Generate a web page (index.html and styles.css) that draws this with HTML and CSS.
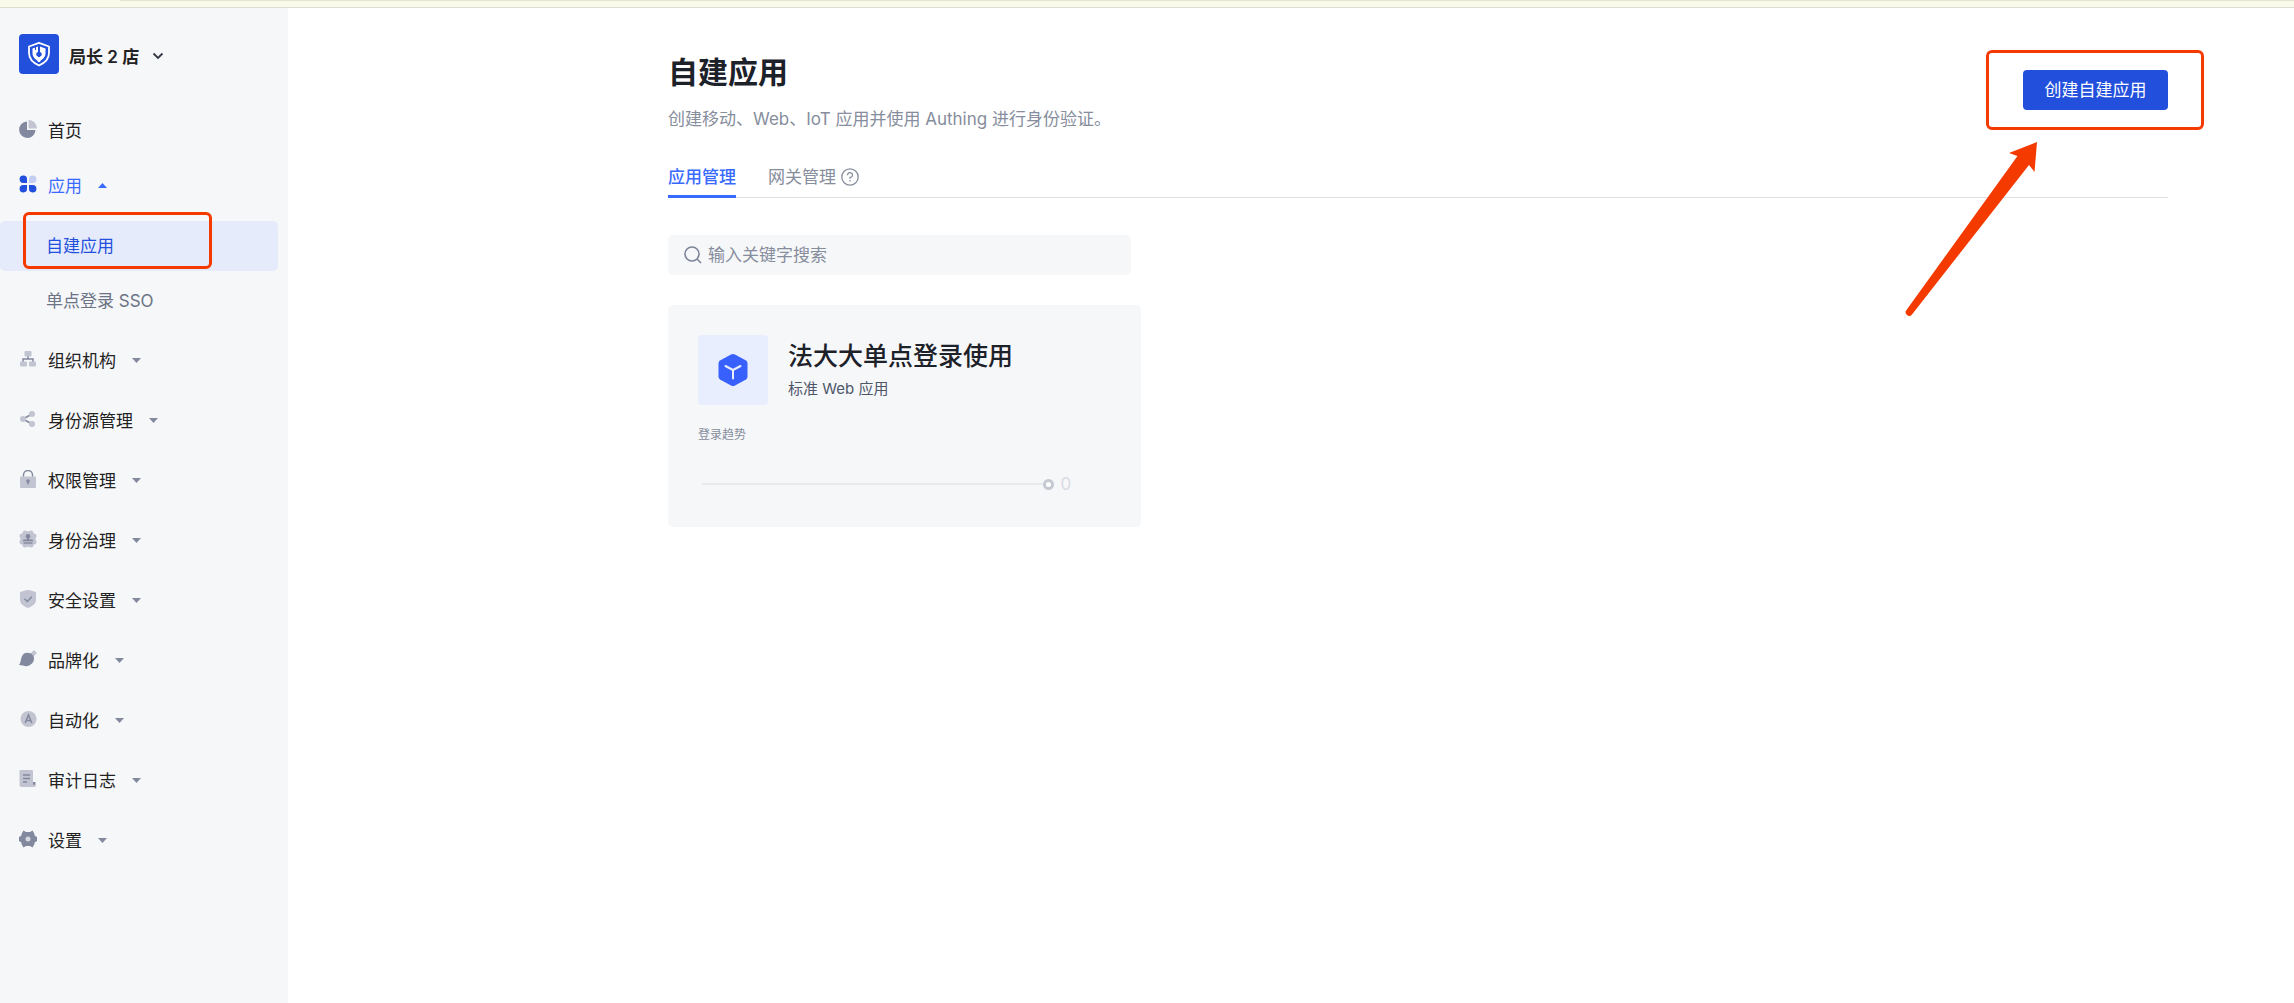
FILE: index.html
```html
<!DOCTYPE html>
<html lang="zh-CN">
<head>
  <meta charset="UTF-8" />
  <meta name="viewport" content="width=device-width, initial-scale=1.0"/>
  <title>自建应用 - Authing</title>
  <link rel="stylesheet" href="styles.css">
</head>
<body>
  <div class="topbar"></div>

  <div class="layout">
    <aside class="sidebar">
      <button class="pool" type="button">
        <span class="pool-logo">
          <svg width="24" height="26" viewBox="0 0 24 26" fill="none">
            <path d="M12 1.800 L22 5.500 V12 C22 18 17.500 22 12 24.500 C6.500 22 2 18 2 12 V5.500 Z" stroke="#fff" stroke-width="1.800" stroke-linejoin="round"/>
            <path d="M11 5.500 V11 A2.300 2.300 0 0 0 11 15.500 V20 C8 18 5.500 16 5.500 12 V7.500 Z M13 5.500 V11 A2.300 2.300 0 0 1 13 15.500 V20 C16 18 18.500 16 18.500 12 V7.500 Z" fill="#fff"/>
            <path d="M12 16 V21" stroke="#fff" stroke-width="2.500"/>
            <path d="M8.500 6 V9" stroke="#2250dd" stroke-width="1"/>
          </svg>
        </span>
        <span class="pool-name">局长 2 店</span>
        <svg class="pool-arrow" width="12" height="8" viewBox="0 0 12 8" fill="none" stroke="#333845" stroke-width="1.800"><path d="M1.500 1.500 L6 6 L10.500 1.500"/></svg>
      </button>

      <nav>
        <ul class="menu">
          <li>
            <a class="menu-item" href="#">
              <svg class="icon" viewBox="0 0 18 18"><path d="M8 1.500 V10 H16.500 A8.200 8.200 0 1 1 8 1.500 Z" fill="#82889e"/><path d="M9.500 0 A8.500 8.500 0 0 1 18 8.500 H9.500 Z" fill="#c2c5d1"/></svg>
              <span>首页</span>
            </a>
          </li>
          <li class="open">
            <a class="menu-item active" href="#">
              <svg class="icon" viewBox="0 0 18 18"><path d="M8 8 H4.500 A3.700 3.700 0 1 1 8 4.500 Z M8 10 V13.500 A3.700 3.700 0 1 1 4.500 10 Z M10 10 H13.500 A3.700 3.700 0 1 1 10 13.500 Z" fill="#2250dd"/><path d="M10 8 V4.500 A3.700 3.700 0 1 1 13.500 8 Z" fill="#c3cef0"/></svg>
              <span>应用</span>
              <svg class="caret" viewBox="0 0 9 5"><path d="M0 5 L4.500 0 L9 5 Z"/></svg>
            </a>
            <ul class="submenu">
              <li class="marked"><a class="submenu-item current" href="#">自建应用</a></li>
              <li><a class="submenu-item" href="#">单点登录 SSO</a></li>
            </ul>
          </li>
          <li>
            <a class="menu-item" href="#">
              <svg class="icon" viewBox="0 0 18 18"><path d="M9 6 V9 M4 12.500 V9 H14 V12.500" fill="none" stroke="#82889e" stroke-width="1.500"/><g fill="#c2c5d1"><rect x="5.500" y="1" width="7" height="5.500" rx="1"/><rect x="1" y="11.500" width="7" height="5" rx="1"/><rect x="10" y="11.500" width="7" height="5" rx="1"/></g></svg>
              <span>组织机构</span>
              <svg class="caret" viewBox="0 0 9 5"><path d="M0 0 H9 L4.500 5 Z"/></svg>
            </a>
          </li>
          <li>
            <a class="menu-item" href="#">
              <svg class="icon" viewBox="0 0 18 18"><path d="M13 4 L4 9 L13 14" fill="none" stroke="#82889e" stroke-width="1.600"/><g fill="#c2c5d1"><circle cx="4" cy="9" r="3"/><circle cx="13" cy="4" r="3"/><circle cx="13" cy="14" r="3"/></g></svg>
              <span>身份源管理</span>
              <svg class="caret" viewBox="0 0 9 5"><path d="M0 0 H9 L4.500 5 Z"/></svg>
            </a>
          </li>
          <li>
            <a class="menu-item" href="#">
              <svg class="icon" viewBox="0 0 18 18"><path d="M4.500 7 V5 A4.500 4.500 0 0 1 13.500 5 V7" fill="none" stroke="#82889e" stroke-width="1.400"/><rect x="1" y="6.500" width="16" height="11.500" rx="1" fill="#c2c5d1"/><circle cx="9" cy="11" r="1.800" fill="#82889e"/><path d="M9 11 V14.500" stroke="#82889e" stroke-width="1.400"/></svg>
              <span>权限管理</span>
              <svg class="caret" viewBox="0 0 9 5"><path d="M0 0 H9 L4.500 5 Z"/></svg>
            </a>
          </li>
          <li>
            <a class="menu-item" href="#">
              <svg class="icon" viewBox="0 0 18 18"><g fill="#c2c5d1"><circle cx="9" cy="9" r="7.700"/><circle cx="6" cy="3" r="2.500"/><circle cx="12" cy="3" r="2.500"/><circle cx="15" cy="6" r="2.500"/><circle cx="15" cy="12" r="2.500"/><circle cx="12" cy="15" r="2.500"/><circle cx="6" cy="15" r="2.500"/><circle cx="3" cy="12" r="2.500"/><circle cx="3" cy="6" r="2.500"/></g><g fill="#82889e"><circle cx="9" cy="6.200" r="2.300"/><path d="M8 7.500 H10 V9.500 H13 A1 1 0 0 1 14 10.500 V11.300 H4 V10.500 A1 1 0 0 1 5 9.500 H8 Z"/><rect x="4.500" y="12.300" width="9" height="1.400"/></g></svg>
              <span>身份治理</span>
              <svg class="caret" viewBox="0 0 9 5"><path d="M0 0 H9 L4.500 5 Z"/></svg>
            </a>
          </li>
          <li>
            <a class="menu-item" href="#">
              <svg class="icon" viewBox="0 0 18 18"><path d="M1 2 C4 1.200 6 .2 9 0 C12 .2 14 1.200 17 2 V10 C17 14 13 16.500 9 18 C5 16.500 1 14 1 10 Z" fill="#c2c5d1"/><path d="M5.500 8.800 L8.300 11.500 L12.800 6.800" fill="none" stroke="#82889e" stroke-width="1.500"/></svg>
              <span>安全设置</span>
              <svg class="caret" viewBox="0 0 9 5"><path d="M0 0 H9 L4.500 5 Z"/></svg>
            </a>
          </li>
          <li>
            <a class="menu-item" href="#">
              <svg class="icon" viewBox="0 0 18 18"><path d="M11 4 L15 0 L18 3 L14 7 Z" fill="#c2c5d1"/><path d="M5 3.500 Q8 2 12 3.500 L14.500 6 Q16 10 13 13.500 Q9 17.500 4 15.500 L0 15 Q1.500 13 2 9.500 Q2.500 5.500 5 3.500 Z" fill="#82889e"/></svg>
              <span>品牌化</span>
              <svg class="caret" viewBox="0 0 9 5"><path d="M0 0 H9 L4.500 5 Z"/></svg>
            </a>
          </li>
          <li>
            <a class="menu-item" href="#">
              <svg class="icon" viewBox="0 0 18 18"><circle cx="9.500" cy="9" r="8" fill="#c2c5d1"/><path d="M6.200 13 L9.500 5 L12.800 13 M7.500 10.500 H11.500" fill="none" stroke="#82889e" stroke-width="1.500"/></svg>
              <span>自动化</span>
              <svg class="caret" viewBox="0 0 9 5"><path d="M0 0 H9 L4.500 5 Z"/></svg>
            </a>
          </li>
          <li>
            <a class="menu-item" href="#">
              <svg class="icon" viewBox="0 0 18 18"><path d="M1.500 0 H13 A1 1 0 0 1 14 1 V12 H17 V15 A2 2 0 0 1 15 17 H2.500 A2 2 0 0 1 .5 15 V1 A1 1 0 0 1 1.500 0 Z" fill="#c2c5d1"/><path d="M4 5 H11 M4 8.500 H11 M4 12 H8" stroke="#82889e" stroke-width="1.300"/><path d="M14 12 H16 V14 A1 1 0 0 1 14 14 Z" fill="#82889e"/></svg>
              <span>审计日志</span>
              <svg class="caret" viewBox="0 0 9 5"><path d="M0 0 H9 L4.500 5 Z"/></svg>
            </a>
          </li>
          <li>
            <a class="menu-item" href="#">
              <svg class="icon" viewBox="0 0 18 18"><path d="M4.500 .5 L7 2 H11 L13.500 .5 L15.500 4 L15.500 5.500 L18 7 V11 L15.500 12.500 L15.500 14 L13.500 17.500 L11 16 H7 L4.500 17.500 L2.500 14 L2.500 12.500 L0 11 V7 L2.500 5.500 L2.500 4 Z" fill="#82889e"/><circle cx="9" cy="9" r="2.500" fill="#d5d8e0"/></svg>
              <span>设置</span>
              <svg class="caret" viewBox="0 0 9 5"><path d="M0 0 H9 L4.500 5 Z"/></svg>
            </a>
          </li>
        </ul>
      </nav>
    </aside>

    <main>
      <header class="page-header">
        <div>
          <h1>自建应用</h1>
          <p>创建移动、Web、IoT 应用并使用 Authing 进行身份验证。</p>
        </div>
        <div class="create">
          <button class="btn-create" type="button">创建自建应用</button>
          <svg class="arrow" width="134" height="176" viewBox="0 0 134 176"><path d="M132 1 L104 12 L112.500 15 L1.500 169 A3 3 0 0 0 7 173.500 L124 24 L129.500 31 Z" fill="#f53a00"/></svg>
        </div>
      </header>

      <nav class="tabs">
        <a class="tab active" href="#">应用管理</a>
        <a class="tab" href="#">
          网关管理
          <svg width="18" height="18" viewBox="0 0 18 18" fill="none" stroke="#868d9c" stroke-width="1.300"><circle cx="9" cy="9" r="8.200"/><path d="M6.500 7.200 A2.500 2.300 0 1 1 9 9.300 V10.800 M9 12 V13.500"/></svg>
        </a>
      </nav>

      <label class="search">
        <svg width="18" height="18" viewBox="0 0 18 18" fill="none" stroke="#7c8498" stroke-width="1.600"><circle cx="8" cy="8" r="7"/><path d="M13 13 L17 17"/></svg>
        <input type="text" placeholder="输入关键字搜索" aria-label="输入关键字搜索">
      </label>

      <section class="apps">
        <article class="app-card">
          <div class="app-head">
            <div class="app-logo">
              <svg width="30" height="34" viewBox="0 0 30 34"><path d="M13 1.500 Q15 .5 17 1.500 L28 7.500 Q29.500 8.500 29.500 10.500 V23.500 Q29.500 25.500 28 26.500 L17 32.500 Q15 33.500 13 32.500 L2 26.500 Q.5 25.500 .5 23.500 V10.500 Q.5 8.500 2 7.500 Z" fill="#3860fc"/><path d="M7.500 13 L15 17 L22.500 13 M15 17 V25.500" fill="none" stroke="#e8eefe" stroke-width="2" stroke-linecap="round"/></svg>
            </div>
            <div>
              <h2>法大大单点登录使用</h2>
              <p>标准 Web 应用</p>
            </div>
          </div>
          <div class="trend-label">登录趋势</div>
          <div class="trend">
            <span class="trend-line"></span>
            <span class="trend-dot"></span>
            <span class="trend-value">0</span>
          </div>
        </article>
      </section>
    </main>
  </div>
</body>
</html>
```
FILE: styles.css
```css
*,
*::before,
*::after {
  box-sizing: border-box;
}

body {
  margin: 0;
  min-height: 100vh;
  display: flex;
  flex-direction: column;
  background: #fff;
  color: #1d2129;
  font-family: Inter, "Noto Sans CJK SC", sans-serif;
  font-size: 17px;
  line-height: 24px;
}

h1, h2, p, ul {
  margin: 0;
  padding: 0;
}

ul {
  list-style: none;
}

a {
  color: inherit;
  text-decoration: none;
}

button, input {
  font: inherit;
  border: none;
  cursor: pointer;
}

svg {
  flex: none;
}

.topbar {
  height: 8px;
  padding-left: 120px;
  background: #fafaeb;
  border-bottom: 1px solid #dcdcd0;
}

.topbar::before {
  content: "";
  display: block;
  height: 1px;
  background: #e4e4d2;
}

.layout {
  display: flex;
  flex: 1;
}

/* menu lateral */
.sidebar {
  flex: none;
  width: 288px;
  padding: 26px 10px 40px 0;
  background: #f6f7f9;
}

.pool {
  display: flex;
  align-items: center;
  margin-bottom: 33px;
  padding: 0 0 0 19px;
  background: none;
  color: #222;
  font-weight: 600;
}

.pool-logo {
  display: flex;
  align-items: center;
  justify-content: center;
  width: 40px;
  height: 40px;
  border-radius: 4px;
  background: #2250dd;
}

.pool-name {
  padding: 6px 13px 0 10px;
}

.pool-arrow {
  margin-top: 4px;
}

.menu > li {
  margin-top: 12px;
}

.menu > li:first-child {
  margin-top: 0;
}

.menu > .open {
  margin-top: 7px;
}

.menu > .open + li {
  margin-top: 11px;
}

.menu-item {
  display: flex;
  align-items: center;
  height: 48px;
  padding-left: 19px;
  color: #222;
}

.menu-item.active {
  color: #396aff;
}

.icon {
  width: 18px;
  height: 18px;
  margin: 0 11px 4px 0;
}

.caret {
  width: 9px;
  height: 5px;
  margin: 0 0 2px 16px;
  fill: #82889e;
}

.active .caret {
  fill: #396aff;
}

.submenu {
  display: flex;
  flex-direction: column;
  gap: 5px;
  padding-top: 11px;
}

.submenu-item {
  display: flex;
  align-items: center;
  height: 50px;
  padding-left: 46px;
  border-radius: 5px;
  color: #6b7385;
}

.submenu-item.current {
  background: #e6ebfb;
  color: #2250dd;
}

.marked,
.create {
  position: relative;
}

.marked::after,
.create::after {
  content: "";
  position: absolute;
  border: 3px solid #f53a00;
  border-radius: 6px;
  pointer-events: none;
}

.marked::after {
  top: -9px;
  left: 23px;
  width: 189px;
  height: 57px;
}

.create::after {
  inset: -20px -36px -20px -37px;
}

.arrow {
  position: absolute;
  top: 71px;
  right: 129px;
  pointer-events: none;
}

/* conteudo */
main {
  flex: 1;
  padding: 44px 126px 40px 380px;
}

.page-header {
  display: flex;
  justify-content: space-between;
  align-items: flex-start;
}

h1 {
  font-size: 30px;
  line-height: 40px;
  font-weight: 600;
}

.page-header p {
  margin-top: 15px;
  color: #868d9c;
}

.create {
  margin-top: 18px;
}

.btn-create {
  display: block;
  min-width: 145px;
  height: 40px;
  padding: 0 21px;
  border-radius: 4px;
  background: #2250dd;
  color: #fff;
}

.tabs {
  display: flex;
  gap: 32px;
  margin-top: 34px;
  border-bottom: 1px solid #dfe1e5;
}

.tab {
  display: flex;
  align-items: center;
  gap: 5px;
  margin-bottom: -1px;
  padding-bottom: 6px;
  border-bottom: 3px solid transparent;
  color: #868d9c;
}

.tab.active {
  border-color: #396aff;
  color: #396aff;
  font-weight: 500;
}

.search {
  display: flex;
  align-items: center;
  gap: 6px;
  width: 463px;
  max-width: 100%;
  height: 40px;
  margin: 37px 0 30px;
  padding: 0 16px;
  border-radius: 5px;
  background: #f6f7f9;
}

.search input {
  flex: 1;
  padding: 0;
  background: none;
  outline: none;
}

.search input::placeholder {
  color: #868d9c;
}

.apps {
  display: grid;
  grid-template-columns: repeat(3, 1fr);
  gap: 40px;
}

.app-card {
  padding: 30px 30px 31px;
  border-radius: 5px;
  background: #f6f7f9;
}

.app-head {
  display: flex;
  align-items: flex-start;
  gap: 20px;
}

.app-logo {
  display: flex;
  align-items: center;
  justify-content: center;
  width: 70px;
  height: 70px;
  border-radius: 4px;
  background: #e8eefe;
}

h2 {
  font-size: 25px;
  line-height: 42px;
  font-weight: 500;
}

.app-head p {
  font-size: 15px;
  color: #4e5669;
}

.trend-label {
  margin-top: 18px;
  font-size: 12px;
  color: #868d9c;
}

.trend {
  display: flex;
  align-items: center;
  height: 24px;
  margin-top: 25px;
  padding: 0 40px 0 4px;
}

.trend-line {
  flex: 1;
  height: 2px;
  background: #e8eaed;
}

.trend-dot {
  width: 11px;
  height: 11px;
  border: 3px solid #c5c9d1;
  border-radius: 50%;
  background: #fff;
}

.trend-value {
  margin-left: 7px;
  color: #d9dce2;
}

@media (max-width: 1200px) {
  main {
    padding: 40px 60px;
  }

  .apps {
    grid-template-columns: 1fr;
  }
}
```
